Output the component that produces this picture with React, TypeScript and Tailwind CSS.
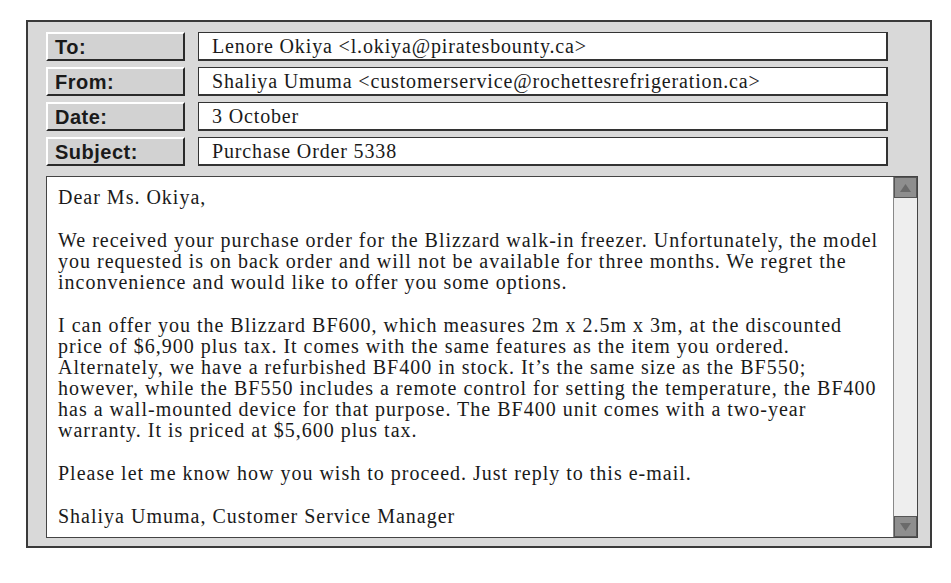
import * as React from "react";

const headerRows = [
  { label: "To:", value: "Lenore Okiya <l.okiya@piratesbounty.ca>" },
  { label: "From:", value: "Shaliya Umuma <customerservice@rochettesrefrigeration.ca>" },
  { label: "Date:", value: "3 October" },
  { label: "Subject:", value: "Purchase Order 5338" },
];

const paragraphs = [
  ["Dear Ms. Okiya,"],
  [
    "We received your purchase order for the Blizzard walk-in freezer. Unfortunately, the model",
    "you requested is on back order and will not be available for three months. We regret the",
    "inconvenience and would like to offer you some options.",
  ],
  [
    "I can offer you the Blizzard BF600, which measures 2m x 2.5m x 3m, at the discounted",
    "price of $6,900 plus tax. It comes with the same features as the item you ordered.",
    "Alternately, we have a refurbished BF400 in stock. It\u2019s the same size as the BF550;",
    "however, while the BF550 includes a remote control for setting the temperature, the BF400",
    "has a wall-mounted device for that purpose. The BF400 unit comes with a two-year",
    "warranty. It is priced at $5,600 plus tax.",
  ],
  ["Please let me know how you wish to proceed. Just reply to this e-mail."],
  ["Shaliya Umuma, Customer Service Manager"],
];

const ScrollButton = ({ up }: { up?: boolean }) => (
  <div className="flex h-[21px] w-full items-center justify-center border border-[#555] bg-[#8e8e8e]">
    <svg width="11" height="8" viewBox="0 0 11 8">
      {up ? (
        <polygon points="5.5,0 11,8 0,8" fill="#6a6a6a" />
      ) : (
        <polygon points="0,0 11,0 5.5,8" fill="#6a6a6a" />
      )}
    </svg>
  </div>
);

export default function App() {
  return (
    <div className="min-h-screen bg-white pl-[26px] pt-[20px]">
      <div className="flex h-[528px] w-[906px] flex-col border-2 border-[#3a3a3a] bg-[#d9d9d9] pb-[8px] pl-[18px] pr-[12px] pt-[10px]">
        <div className="flex flex-col gap-[6px]">
          {headerRows.map((row) => (
            <div key={row.label} className="flex gap-[13px]">
              <div
                className="flex h-[29px] w-[139px] items-center border-b-2 border-l-2 border-r-2 border-t-2 border-b-[#2a2a2a] border-l-white border-r-[#2a2a2a] border-t-white bg-[#d2d2d2] pl-[7px] text-[20px] font-bold tracking-[0.5px] text-[#1a1a1a]"
                style={{ fontFamily: '"Liberation Sans", Arial, sans-serif' }}
              >
                {row.label}
              </div>
              <div
                className="flex h-[29px] w-[690px] items-center border border-b-2 border-r-2 border-[#333] bg-white pl-[13px] text-[20px] tracking-[0.85px] text-[#1a1a1a]"
                style={{ fontFamily: '"Liberation Serif", "Times New Roman", serif' }}
              >
                {row.value}
              </div>
            </div>
          ))}
        </div>

        <div className="mt-[10px] flex flex-1 border border-[#444] bg-white">
          <div
            className="flex flex-1 flex-col gap-[22px] pl-[11px] pt-[10px] text-[20px] leading-[21px] tracking-[1px] text-[#1a1a1a]"
            style={{ fontFamily: '"Liberation Serif", "Times New Roman", serif' }}
          >
            {paragraphs.map((lines, i) => (
              <p key={i}>
                {lines.map((line, j) => (
                  <span key={j} className="block whitespace-nowrap">
                    {line}
                  </span>
                ))}
              </p>
            ))}
          </div>
          <div className="flex w-[24px] flex-col border-l border-[#888] bg-[#eeeeee]">
            <ScrollButton up />
            <div className="flex-1" />
            <ScrollButton />
          </div>
        </div>
      </div>
    </div>
  );
}
